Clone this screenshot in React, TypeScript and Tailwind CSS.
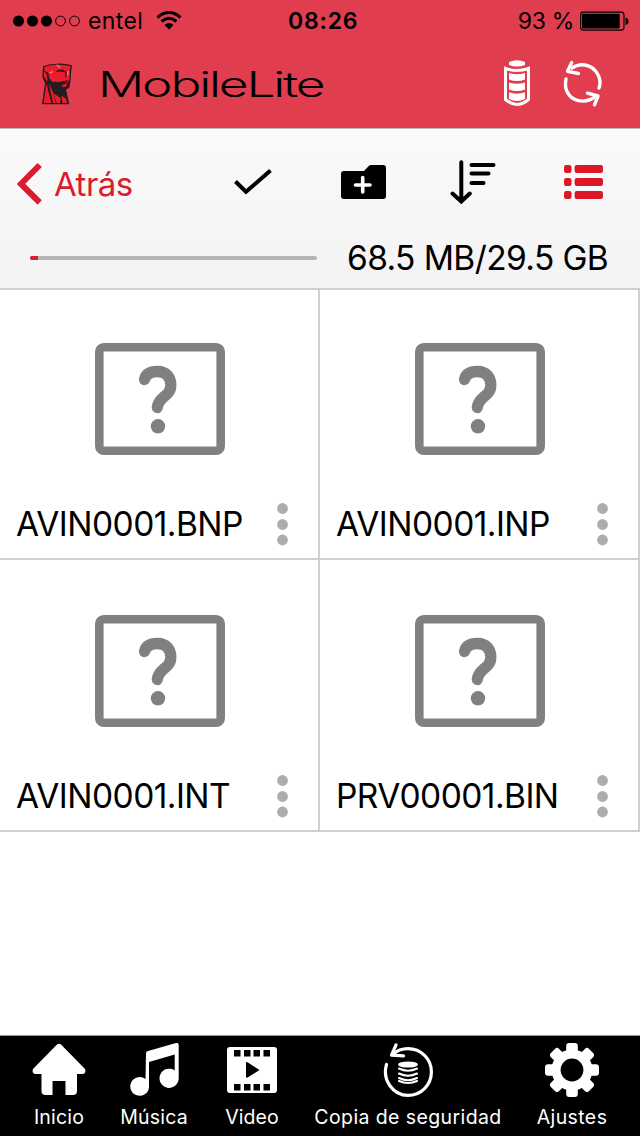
import type { ReactNode } from "react";

const FONT = "font-[Inter,'Liberation_Sans',sans-serif]";

function StatusBar() {
  return (
    <div className="flex h-10 items-center pl-[13px] pr-[11px]">
      <svg width="68" height="12" viewBox="0 0 68 12" className="mt-[1px]">
        <circle cx="5.5" cy="6" r="5.5" />
        <circle cx="19.5" cy="6" r="5.5" />
        <circle cx="33.5" cy="6" r="5.5" />
        <circle cx="47.5" cy="6" r="4.9" fill="none" stroke="#000" strokeWidth="1" />
        <circle cx="61.5" cy="6" r="4.9" fill="none" stroke="#000" strokeWidth="1" />
      </svg>
      <span className="ml-[7px] mt-[2px] w-[56px] whitespace-nowrap text-[23px] leading-10 tracking-[0.4px]">entel</span>
      <svg width="26" height="20" viewBox="0 0 26 20" className="ml-[12px] mt-[1px]" fill="none" stroke="#000" strokeWidth="3">
        <path d="M1.5 6.5Q13-3.5 24.5 6.5" />
        <path d="M5.5 10.5Q13 4 20.5 10.5" />
        <path d="M8.5 14Q13 10 17.5 14L13 18.5Z" fill="#000" stroke="none" />
      </svg>
      <span className="ml-[106px] mt-[2px] w-[72px] whitespace-nowrap text-[23px] font-semibold leading-10 tracking-[0.8px]">08:26</span>
      <span className="ml-auto mt-[2px] whitespace-nowrap text-[23px] leading-10 tracking-[-0.3px]">93 %</span>
      <svg width="50" height="20" viewBox="0 0 50 20" className="ml-[5px] mt-[1px]">
        <rect x="1.6" y="1.1" width="43.4" height="18" rx="2.8" fill="none" stroke="#000" strokeWidth="1.1" />
        <rect x="3" y="2.7" width="37.7" height="14.8" rx="1" />
        <path d="M46.5 6.5Q49.5 7 49.5 10.2T46.5 14Z" />
      </svg>
    </div>
  );
}

function HeadLogo() {
  return (
    <svg width="31" height="42" viewBox="36 38 93 126">
      <path d="M39 48Q58 39 84 40Q106 39 126 45L123 69L122 89L118 112L108 118L118 162H36L45 98L37 80Z" fill="#241c20" />
      <path d="M42 51Q58 43 84 43.5Q106 43 122 48L120 57L118 92L112 98L92 95L66 94L58 83L55 67L44 62Z" fill="#ed1c2b" />
      <path d="M41 64L49 69L53 90L50 92L42 79Z" fill="#ef1c2b" />
      <path d="M78 63Q91 53 105 61L104 66Q92 62 80 65ZM106 62L110 63L110 78L106 84ZM90 94L116 90L114 94L98 99Z" fill="#241c20" />
      <path d="M94 104L112 100L108 109L100 111Z" fill="#e91c2b" />
      <path d="M49 99L64 158H41Z" fill="#ed1c2b" />
      <path d="M56 97L70 128L77 158H69Z" fill="#e91c2b" />
      <path d="M70 128L92 144L90 158H80Z" fill="#ed1c2b" />
      <path d="M94 136L108 145L111 158H97Z" fill="#ed1c2b" />
      <path d="M81 43L84 48L91 51M59 67L69 64M114 62L113 76" stroke="#ffb5ba" strokeWidth="2.5" fill="none" />
    </svg>
  );
}

function Header() {
  return (
    <header className="h-[128px] bg-[#e03d4e]">
      <StatusBar />
      <div className="flex h-[88px] items-start pl-[42px]">
        <div className="mt-[22.5px]"><HeadLogo /></div>
        <div className="ml-[25px] mt-[22px] h-11 w-[300px]">
          <span className="inline-block origin-left scale-x-[1.47] whitespace-nowrap text-[35px] font-light leading-[44px] tracking-[-1.5px]">MobileLite</span>
        </div>
        <svg width="28" height="48" viewBox="0 0 28 48" className="ml-[105px] mt-[20px]" fill="#fff">
          <path d="M6 2Q14-1.5 22 2V5Q14 8 6 5Z" />
          <path d="M2.5 8.5Q14 12.6 25.5 8.5V39.5Q14 49.5 2.5 39.5Z" fill="none" stroke="#fff" strokeWidth="3" />
          <path d="M6 13Q14 15.5 22 13V19.5Q14 22.5 6 19.5ZM6 22.5Q14 25 22 22.5V29.5Q14 32.5 6 29.5ZM6 32.3Q14 35 22 32.3V39Q14 43 6 39Z" />
        </svg>
        <svg width="42" height="48" viewBox="0 0 42 48" className="ml-[31px] mt-[20px]" fill="none" stroke="#fff" strokeWidth="3.4" strokeLinecap="round" strokeLinejoin="round">
          <path d="M10 8C18 2.5 28 4.5 33.5 11C37.5 16 39 22.5 37 28" />
          <path d="M9.7 2.5L5.5 11.3L16.5 13.5" />
          <path d="M4 19C2 28 5.5 35.5 12 39C18.5 42.5 27 41.5 32 37.5" />
          <path d="M25.5 33.2L36 36L32.5 44.8" />
        </svg>
      </div>
    </header>
  );
}

function Toolbar() {
  return (
    <section className="h-[162px] border-b-2 border-t border-b-[#cfcfcf] border-t-[#b9b9b9] bg-linear-to-b from-[#fafafa] to-[#f3f3f3]">
      <div className="flex h-[100px] items-start pl-[17px] pt-[31px]">
        <svg width="26" height="44" viewBox="0 0 26 44" className="mt-[2px]" fill="none" stroke="#dc1b30" strokeWidth="6">
          <path d="M22.7 3L4 22L22.7 40.5" />
        </svg>
        <span className="ml-[11px] w-[100px] whitespace-nowrap text-[33px] leading-[48px] tracking-[-0.5px] text-[#dc1b30]">Atrás</span>
        <svg width="40" height="28" viewBox="0 0 40 28" className="ml-[79px] mt-[8px]" fill="none" stroke="#000" strokeWidth="4">
          <path d="M2.5 13.5L13 23.8L37.5 2.5" />
        </svg>
        <svg width="46" height="36" viewBox="0 0 46 36" className="ml-[68px] mt-[4px]">
          <path d="M3 7H23L28 1.8Q28.8 1 30 1H42Q45 1 45 4V32Q45 35 42 35H3Q0 35 0 32V10Q0 7 3 7Z" />
          <path d="M21.7 13.5V28M14.5 21H29" stroke="#fff" strokeWidth="3.6" strokeLinecap="round" />
        </svg>
        <svg width="48" height="46" viewBox="0 0 48 46" className="ml-[63px] mt-0" fill="none" stroke="#000" strokeWidth="4" strokeLinecap="round">
          <path d="M11.3 2.3V40M2.5 33.5L11.3 41.5L19.8 33.5M21.5 5H43.5M21.5 13.5H38.5M21.5 23H33.5" />
        </svg>
        <svg width="40" height="36" viewBox="0 0 40 36" className="ml-[66px] mt-[4px]" fill="#dc1728">
          {[1, 14, 27].map((y) => (
            <g key={y}>
              <rect x="0" y={y} width="7.5" height="8" rx="2.2" />
              <rect x="10.6" y={y} width="28.4" height="8" rx="2.2" />
            </g>
          ))}
        </svg>
      </div>
      <div className="flex h-[58px] items-center pl-[30px]">
        <div className="flex h-1 w-[287px] overflow-hidden rounded-full bg-[#b5b5b5]">
          <div className="w-2 bg-[#dc1b30]" />
        </div>
        <span className="ml-[30px] whitespace-nowrap text-[33.5px] leading-[58px] tracking-[-0.6px]">68.5 MB/29.5 GB</span>
      </div>
    </section>
  );
}

function FileCell({ name, first }: { name: string; first: boolean }) {
  return (
    <div className={"flex flex-col border-b-2 border-r-2 border-[#cfcfcf] bg-white " + (first ? "h-[270px] pt-[53px]" : "h-[272px] pt-[55px]")}>
      <svg width="130" height="112" viewBox="0 0 130 112" className="ml-[95px]" fill="none" stroke="#808080">
        <rect x="4.3" y="4.3" width="121.4" height="103.4" rx="4.5" strokeWidth="8.6" />
        <path d="M9 9H121V103H9Z" fill="#fff" stroke="none" />
        <path d="M49.5 36.5C51 30.5 56 28.5 62.5 28.5C71 28.5 75.8 34 75.8 42C75.8 54 63.5 53 62.3 64.5" strokeWidth="11.3" strokeLinecap="round" />
        <circle cx="63" cy="83.3" r="7.2" fill="#808080" stroke="none" />
      </svg>
      <div className="mt-[46px] flex items-center pl-[16px]">
        <span className="w-[261px] whitespace-nowrap text-[33.5px] leading-[46px] tracking-[-0.55px]">{name}</span>
        <svg width="12" height="44" viewBox="0 0 12 44" className="mt-[2px] shrink-0" fill="#adadad">
          <circle cx="5.5" cy="5.5" r="5.4" />
          <circle cx="5.5" cy="21.5" r="5.4" />
          <circle cx="5.5" cy="37" r="5.4" />
        </svg>
      </div>
    </div>
  );
}

function Tab({ label, children, className }: { label: string; children: ReactNode; className: string }) {
  return (
    <div className={"flex flex-col items-center text-white " + className}>
      {children}
      <span className="mt-[7px] whitespace-nowrap text-[19.5px] leading-[26px]">{label}</span>
    </div>
  );
}

function TabBar() {
  return (
    <nav className="flex h-[101px] border-t border-[#8e9993] bg-black pt-[7px]">
      <Tab label="Inicio" className="ml-[19px] w-20 tracking-[0.2px]">
        <svg width="54" height="54" viewBox="0 0 54 54" fill="#fff">
          <path d="M24.5 2Q27-.5 29.5 2L53 26Q54.5 30 51 31H45V48Q45 52 41 52H33.5V38H20.5V52H13.5Q9.5 52 9.5 48V31H3Q-.5 30 1 26Z" />
        </svg>
      </Tab>
      <Tab label="Música" className="ml-[10px] w-[90px] tracking-[0.2px]">
        <svg width="50" height="54" viewBox="0 0 50 54" className="ml-0.5" fill="#fff">
          <path d="M16 10Q16 8.5 18 8L46 0Q48.7-.5 48.7 2V35A9.6 9.6 0 1 1 44.7 27.5V11.5L19 19V44.5A9.4 9.4 0 1 1 15.5 36Z" />
        </svg>
      </Tab>
      <Tab label="Video" className="ml-[13px] w-20 tracking-[0.1px]">
        <svg width="50" height="54" viewBox="0 0 50 54">
          <rect y="4" width="50" height="46" rx="3" fill="#fff" />
          {[7, 17, 26.5, 36.5].map((x) => (
            <g key={x}>
              <rect x={x} y="7" width="6.5" height="6.5" />
              <rect x={x} y="41" width="6.5" height="6.5" />
            </g>
          ))}
          <path d="M19 20Q19 18.5 20.5 19.3L32.5 27L20.5 34.5Q19 35.2 19 33.5Z" />
        </svg>
      </Tab>
      <Tab label="Copia de seguridad" className="ml-[12px] w-[208px] tracking-[0.4px]">
        <svg width="50" height="54" viewBox="0 0 50 54" fill="none" stroke="#fff" strokeWidth="3.2" strokeLinecap="round" strokeLinejoin="round">
          <path d="M3.5 21.5C-1 37 10 52.4 25 52.4A23.4 23.4 0 0 0 25 5.6C19 5.6 14 7.5 9.5 11.5" />
          <path d="M13 2L8.5 12.2L20.5 12.8" />
          <ellipse cx="25" cy="21.5" rx="10" ry="3.1" fill="#fff" stroke="none" />
          <path d="M16 25.5Q25 30 34 25.5M16 30.5Q25 35 34 30.5M16 35Q25 39.5 34 35M16 38Q25 42 34 38" strokeWidth="2.1" />
        </svg>
      </Tab>
      <Tab label="Ajustes" className="ml-[10px] w-[100px] tracking-[0.4px]">
        <svg width="54" height="54" viewBox="-27 -27 54 54" fill="#fff">
          {[0, 45, 90, 135].map((a) => (
            <rect key={a} x="-5.8" y="-27" width="11.6" height="54" rx="3" transform={`rotate(${a})`} />
          ))}
          <circle r="20.5" />
          <circle r="11.4" fill="#000" />
        </svg>
      </Tab>
    </nav>
  );
}

export default function App() {
  return (
    <div className={"flex h-[1136px] w-[640px] flex-col overflow-hidden bg-white text-black " + FONT}>
      <Header />
      <Toolbar />
      <main className="grid grow grid-cols-2 content-start">
        <FileCell name="AVIN0001.BNP" first />
        <FileCell name="AVIN0001.INP" first />
        <FileCell name="AVIN0001.INT" first={false} />
        <FileCell name="PRV00001.BIN" first={false} />
      </main>
      <TabBar />
    </div>
  );
}
